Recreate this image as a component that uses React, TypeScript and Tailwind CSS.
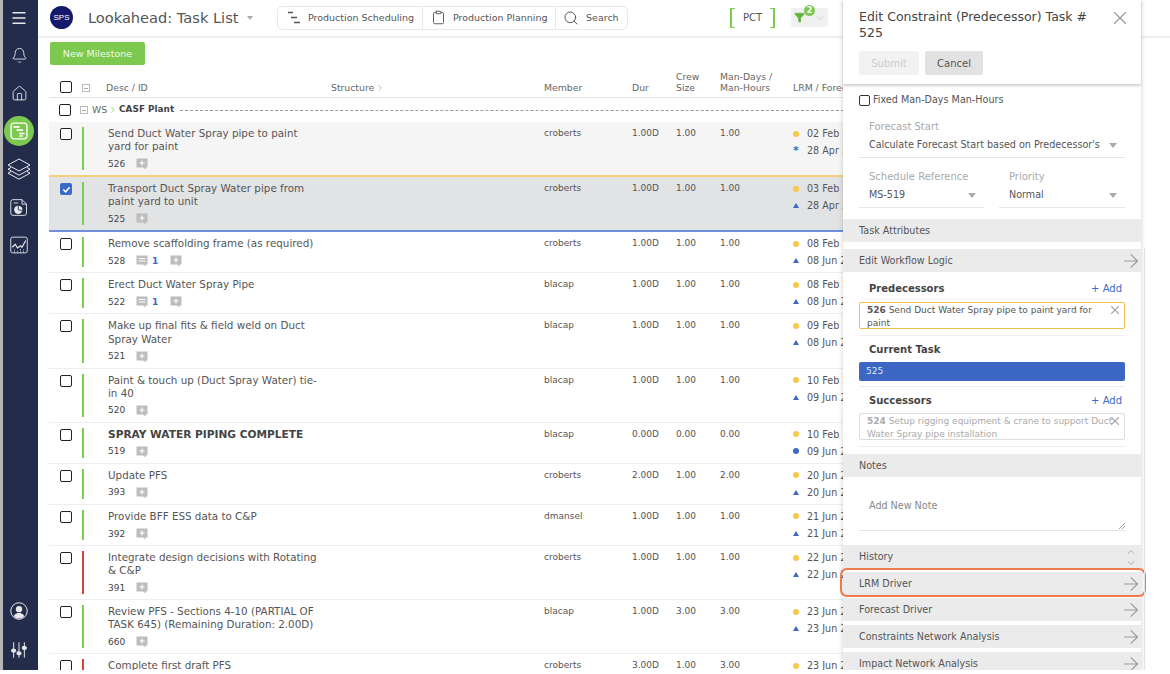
import React from 'react';
import { ArrowRight, Bell, ChevronDown, ChevronUp, ChevronRight, Clipboard, Filter, Home, Menu, Search, X } from 'lucide-react';

type Task = {
  id: string;
  title: string;
  member: string;
  dur: string;
  crew: string;
  hours: string;
  lrm: string;
  forecast: string;
  marker?: 'star' | 'tri' | 'dot';
  bar?: 'green' | 'red';
  comments?: boolean;
  bold?: boolean;
  state?: 'pred' | 'current';
};

const tasks: Task[] = [
  { id: '526', title: 'Send Duct Water Spray pipe to paint yard for paint', member: 'croberts', dur: '1.00D', crew: '1.00', hours: '1.00', lrm: '02 Feb 2022', forecast: '28 Apr 2022', marker: 'star', state: 'pred' },
  { id: '525', title: 'Transport Duct Spray Water pipe from paint yard to unit', member: 'croberts', dur: '1.00D', crew: '1.00', hours: '1.00', lrm: '03 Feb 2022', forecast: '28 Apr 2022', state: 'current' },
  { id: '528', title: 'Remove scaffolding frame (as required)', member: 'croberts', dur: '1.00D', crew: '1.00', hours: '1.00', lrm: '08 Feb 2022', forecast: '08 Jun 2022', comments: true },
  { id: '522', title: 'Erect Duct Water Spray Pipe', member: 'blacap', dur: '1.00D', crew: '1.00', hours: '1.00', lrm: '08 Feb 2022', forecast: '08 Jun 2022', comments: true },
  { id: '521', title: 'Make up final fits & field weld on Duct Spray Water', member: 'blacap', dur: '1.00D', crew: '1.00', hours: '1.00', lrm: '09 Feb 2022', forecast: '08 Jun 2022' },
  { id: '520', title: 'Paint & touch up (Duct Spray Water) tie-in 40', member: 'blacap', dur: '1.00D', crew: '1.00', hours: '1.00', lrm: '10 Feb 2022', forecast: '09 Jun 2022' },
  { id: '519', title: 'SPRAY WATER PIPING COMPLETE', member: 'blacap', dur: '0.00D', crew: '0.00', hours: '0.00', lrm: '10 Feb 2022', forecast: '09 Jun 2022', marker: 'dot', bold: true },
  { id: '393', title: 'Update PFS', member: 'croberts', dur: '2.00D', crew: '1.00', hours: '2.00', lrm: '20 Jun 2022', forecast: '20 Jun 2022' },
  { id: '392', title: 'Provide BFF ESS data to C&P', member: 'dmansel', dur: '1.00D', crew: '1.00', hours: '1.00', lrm: '21 Jun 2022', forecast: '21 Jun 2022' },
  { id: '391', title: 'Integrate design decisions with Rotating & C&P', member: 'croberts', dur: '1.00D', crew: '1.00', hours: '1.00', lrm: '22 Jun 2022', forecast: '22 Jun 2022', bar: 'red' },
  { id: '660', title: 'Review PFS - Sections 4-10 (PARTIAL OF TASK 645) (Remaining Duration: 2.00D)', member: 'blacap', dur: '1.00D', crew: '3.00', hours: '3.00', lrm: '23 Jun 2022', forecast: '23 Jun 2022' },
  { id: '', title: 'Complete first draft PFS', member: 'croberts', dur: '3.00D', crew: '1.00', hours: '3.00', lrm: '23 Jun 2022', forecast: '23 Jun 2022', bar: 'red' },
];

function GanttIcon({ size = 20 }: { size?: number }) {
  return (
    <svg width={size} height={size} viewBox="0 0 24 24" fill="none" stroke="currentColor" strokeWidth="1.6" strokeLinecap="round">
      <path d="M6 2.5h12a3.5 3.5 0 0 1 3.5 3.5v12a3.5 3.5 0 0 1-3.5 3.5H6A3.5 3.5 0 0 1 2.5 18V6A3.5 3.5 0 0 1 6 2.5z" />
      <path d="M6 7h6M10 11h6M13 15h5M13 18h3" strokeWidth="2" />
    </svg>
  );
}

function StackIcon() {
  return (
    <svg width="24" height="24" viewBox="0 0 24 24" fill="none" stroke="currentColor" strokeWidth="1" strokeLinejoin="round">
      <path d="M12 2 23 8l-11 6L1 8z" />
      <path d="m4 10.5-3 1.7 11 6 11-6-3-1.7" />
      <path d="m4 14.5-3 1.7 11 6 11-6-3-1.7" />
    </svg>
  );
}

function ReportIcon() {
  return (
    <svg width="18" height="19" viewBox="0 0 24 24" fill="none" stroke="currentColor" strokeWidth="1.2" strokeLinejoin="round">
      <path d="M4 1.5h12l6 6v12a3 3 0 0 1-3 3H4a3 3 0 0 1-3-3v-15a3 3 0 0 1 3-3z" />
      <path d="M16 1.5v6h6" />
      <path d="M5 6h6" />
      <circle cx="11" cy="15" r="5.5" fill="currentColor" stroke="none" />
      <path d="M11 15V9.5M11 15l5 1" stroke="#232d4b" strokeWidth="1.2" />
    </svg>
  );
}

function ChartIcon() {
  return (
    <svg width="18" height="18" viewBox="0 0 24 24" fill="none" stroke="currentColor" strokeWidth="1.2" strokeLinejoin="round">
      <rect x="1" y="1.5" width="22" height="21" rx="2.5" />
      <path d="m3 15 4-4 3 5 4-3 2 2 5-9" strokeWidth="1.6" />
      <path d="M6 22v-4M10 22v-3M14 22v-5M18 22v-4" strokeDasharray="1.5 1.5" />
    </svg>
  );
}

function UserIcon() {
  return (
    <svg width="18" height="18" viewBox="0 0 24 24" fill="none" stroke="currentColor" strokeWidth="1.3">
      <circle cx="12" cy="12" r="11" />
      <circle cx="12" cy="9.5" r="4.2" fill="currentColor" stroke="none" />
      <path d="M5 19c.5-3 4-3.8 5-4.5h4c1 .7 4.5 1.5 5 4.5-2 2-4.5 3-7 3s-5-1-7-3z" fill="currentColor" stroke="none" />
    </svg>
  );
}

function SlidersIcon() {
  return (
    <svg width="16" height="16" viewBox="0 0 24 24" fill="none" stroke="currentColor" strokeWidth="1.5" strokeLinecap="round">
      <path d="M4 1v22M12 1v22M20 1v22" />
      <rect x="1" y="11" width="6" height="4" rx="1" fill="currentColor" />
      <rect x="9" y="15" width="6" height="4" rx="1" fill="currentColor" />
      <rect x="17" y="7" width="6" height="4" rx="1" fill="currentColor" />
    </svg>
  );
}

function ProductionIcon() {
  return (
    <svg width="12" height="13" viewBox="0 0 12 13" fill="none" stroke="#555" strokeWidth="1.4">
      <path d="M0 1.5h5M3 6.5h6M6 11.5h6" />
    </svg>
  );
}

function NoteIcon({ lines }: { lines?: boolean }) {
  return (
    <svg width="12" height="12" viewBox="0 0 12 12">
      <path d="M0.5 0.5h11v9h-2v2l-2.5-2h-6.5z" fill="#bdbdbd" />
      {lines ? (
        <path d="M2.5 3.5h7M2.5 6h7" stroke="#fff" strokeWidth="1" />
      ) : (
        <path d="M6 2.5v5M3.5 5h5" stroke="#fff" strokeWidth="1.2" />
      )}
    </svg>
  );
}

function MinusBox() {
  return (
    <span className="w-[8px] h-[8px] border border-[#bbb] shrink-0 flex items-center justify-center">
      <span className="w-[4px] h-px bg-[#aaa]" />
    </span>
  );
}

function Checkbox({ checked }: { checked?: boolean }) {
  if (checked) {
    return (
      <div className="w-[12px] h-[12px] rounded-[2px] bg-[#3b69c9] flex items-center justify-center">
        <svg width="9" height="9" viewBox="0 0 10 10" fill="none" stroke="#fff" strokeWidth="1.8">
          <path d="m1.5 5 2.5 2.5 4.5-5" />
        </svg>
      </div>
    );
  }
  return <div className="w-[12px] h-[12px] rounded-[2px] border-[1.5px] border-[#222] bg-white" />;
}

function Marker({ kind }: { kind?: 'star' | 'tri' | 'dot' }) {
  if (kind === 'star') return <span className="w-[6px] text-center text-[#3b69c9] text-[11px] font-bold leading-[17px]">*</span>;
  if (kind === 'dot') return <span className="w-[6px] h-[6px] rounded-full bg-[#3b69c9]" />;
  return <span className="w-0 h-0 border-l-[3px] border-r-[3px] border-b-[5px] border-l-transparent border-r-transparent border-b-[#3b69c9]" />;
}

function TaskRow({ task }: { task: Task }) {
  const rowClass =
    task.state === 'pred'
      ? 'bg-[#f5f5f5] border-b-2 border-[#f4cf7c]'
      : task.state === 'current'
        ? 'bg-[#e2e3e5] border-b-2 border-[#6f8fd8]'
        : 'border-b border-[#eeeeee]';
  return (
    <div className={`flex text-[9px] leading-[13px] text-[#555] ${rowClass}`}>
      <div className="w-[33px] pl-[11px] pt-[6px] shrink-0">
        <Checkbox checked={task.state === 'current'} />
      </div>
      <div className={`w-[2px] my-[5px] shrink-0 ${task.bar === 'red' ? 'bg-[#d8413a]' : 'bg-[#7dcf4f]'}`} />
      <div className="w-[247px] pl-[24px] pt-[5px] shrink-0">
        <div className={task.bold ? 'font-bold text-[#444] w-[215px] text-[10.6px] leading-[13.08px]' : 'w-[215px] text-[10.35px] leading-[13.08px]'}>{task.title}</div>
        <div className="flex items-center h-[16px] mt-[3px] mb-[3px]">
          <span className="w-[28px] text-[#444]">{task.id}</span>
          {task.comments && (
            <span className="flex items-center w-[34px]">
              <NoteIcon lines />
              <span className="ml-[4px] font-bold text-[#3b69c9]">1</span>
            </span>
          )}
          <NoteIcon />
        </div>
      </div>
      <div className="w-[213px] shrink-0" />
      <div className="w-[88px] pt-[5px] shrink-0">{task.member}</div>
      <div className="w-[44px] pt-[5px] shrink-0">{task.dur}</div>
      <div className="w-[44px] pt-[5px] shrink-0">{task.crew}</div>
      <div className="w-[73px] pt-[5px] shrink-0">{task.hours}</div>
      <div className="pt-[3px] shrink-0 text-[9.6px] leading-[17px]">
        <div className="flex items-center gap-[8px]">
          <span className="w-[6px] h-[6px] rounded-full bg-[#f7c948]" />
          <span>{task.lrm}</span>
        </div>
        <div className="flex items-center gap-[8px]">
          <Marker kind={task.marker} />
          <span>{task.forecast}</span>
        </div>
      </div>
    </div>
  );
}

function BarRow({ label, icon = true }: { label: string; icon?: boolean }) {
  return (
    <div className="h-[23px] bg-[#ebebeb] flex items-center justify-between pl-[16px] text-[#555] text-[9.6px]">
      <span className={icon ? 'mt-[2px]' : 'mt-[1px]'}>{label}</span>
      {icon && <ArrowRight size={22} strokeWidth={1.2} className="text-[#999] -mr-[1px]" />}
    </div>
  );
}

function SelectField({ label, value, width }: { label: string; value: string; width: string }) {
  return (
    <div className={`${width} border-b border-[#e6e6e6] h-[38px]`}>
      <div className="pl-[10px] text-[10px] leading-[14px] text-[#aaa]">{label}</div>
      <div className="pl-[10px] pr-[8px] mt-[4px] flex items-center justify-between text-[9.6px] leading-[14px] text-[#555]">
        <span className="whitespace-nowrap">{value}</span>
        <span className="w-0 h-0 border-l-[4px] border-r-[4px] border-t-[5px] border-l-transparent border-r-transparent border-t-[#aaa]" />
      </div>
    </div>
  );
}

function SectionHead({ label, add }: { label: string; add?: boolean }) {
  return (
    <div className="h-[14px] flex items-center justify-between pl-[10px] pr-[3px] text-[10px]">
      <span className="font-bold text-[#444]">{label}</span>
      {add && <span className="text-[#3b69c9]">+ Add</span>}
    </div>
  );
}

export default function App() {
  return (
    <div className="w-[1170px] h-[670px] overflow-hidden relative flex bg-white font-['DejaVu_Sans',sans-serif]">
      <aside className="w-[38px] shrink-0 border-l-[3px] border-[#b5b5b5] bg-[#232d4b] pr-[3px] flex flex-col items-center text-[#e8e8ec]">
        <div className="h-[36px] flex items-center justify-center"><Menu size={18} strokeWidth={1.75} /></div>
        <div className="h-[38px] flex items-center justify-center"><Bell size={17} strokeWidth={1.25} /></div>
        <div className="h-[38px] flex items-center justify-center"><Home size={17} strokeWidth={1.25} /></div>
        <div className="h-[38px] flex items-center justify-center">
          <div className="w-[30px] h-[30px] rounded-full bg-[#7dc94f] flex items-center justify-center text-white"><GanttIcon /></div>
        </div>
        <div className="h-[38px] flex items-center justify-center"><StackIcon /></div>
        <div className="h-[38px] flex items-center justify-center"><ReportIcon /></div>
        <div className="h-[38px] flex items-center justify-center"><ChartIcon /></div>
        <div className="mt-auto h-[38px] flex items-center justify-center"><UserIcon /></div>
        <div className="h-[40px] flex items-center justify-center"><SlidersIcon /></div>
      </aside>

      <main className="flex-1 min-w-0 overflow-hidden">
        <header className="h-[38px] border-b-2 border-[#eeeeee] flex items-center pl-[12px] pb-[1px]">
          <div className="w-[23px] h-[23px] rounded-full bg-[#14196b] flex items-center justify-center text-white text-[8px] font-['Liberation_Sans',sans-serif]">SPS</div>
          <h1 className="ml-[15px] w-[150px] text-[14.6px] leading-[20px] text-[#555] whitespace-nowrap">Lookahead: Task List</h1>
          <span className="ml-[9px] w-0 h-0 border-l-[3.5px] border-r-[3.5px] border-t-[4px] border-l-transparent border-r-transparent border-t-[#aaa]" />
          <div className="ml-[24px] h-[24px] border border-[#e8e8e8] rounded-[5px] flex text-[9.5px] text-[#555] whitespace-nowrap">
            <div className="w-[145px] flex items-center pl-[10px] border-r border-[#e8e8e8]">
              <ProductionIcon />
              <span className="ml-[8px] mt-[1px]">Production Scheduling</span>
            </div>
            <div className="w-[133px] flex items-center pl-[8px] border-r border-[#e8e8e8]">
              <Clipboard size={15} strokeWidth={1.5} />
              <span className="ml-[7px] mt-[1px]">Production Planning</span>
            </div>
            <div className="w-[71px] flex items-center pl-[7px]">
              <Search size={16} strokeWidth={1.5} />
              <span className="ml-[7px] mt-[1px]">Search</span>
            </div>
          </div>
          <div className="ml-[102px] w-[45px] h-[20px] border-x-2 border-[#7dc94f] relative flex items-center justify-center text-[10px] text-[#555]">
            <span className="absolute left-0 top-0 w-[3px] h-full border-y border-[#7dc94f]" />
            <span className="absolute right-0 top-0 w-[3px] h-full border-y border-[#7dc94f]" />
            PCT
          </div>
          <div className="ml-[16px] w-[37px] h-[19px] bg-[#f0f0f0] rounded-[2px] relative flex items-center pl-[3px]">
            <Filter size={11} className="text-[#5fb536] fill-[#5fb536]" />
            <ChevronDown size={12} strokeWidth={1} className="ml-[9px] text-[#aaa]" />
            <span className="absolute left-[13px] -top-[3px] w-[11px] h-[11px] rounded-full bg-[#7dc94f] text-white text-[8px] leading-[11px] font-bold text-center">2</span>
          </div>
        </header>

        <div className="pl-[12px] pt-[4px]">
          <button className="block w-[95px] h-[23px] pt-[1px] bg-[#7dc94f] rounded-[2px] text-[9.5px] text-[#eefbe6]">New Milestone</button>
        </div>

        <div className="ml-[11px] w-[820px]">
          <div className="mt-[3px] h-[30px] flex items-end border-b border-[#e4e4e4] pb-[4px] text-[9.3px] leading-[11px] text-[#666]">
            <div className="w-[33px] pl-[11px] shrink-0"><Checkbox /></div>
            <div className="w-[24px] shrink-0 pb-[1px]"><MinusBox /></div>
            <div className="w-[225px] shrink-0">Desc / ID</div>
            <div className="w-[213px] shrink-0 flex items-center">Structure <ChevronRight size={10} strokeWidth={1} className="ml-[1px]" /></div>
            <div className="w-[88px] shrink-0">Member</div>
            <div className="w-[44px] shrink-0">Dur</div>
            <div className="w-[44px] shrink-0">Crew<br />Size</div>
            <div className="w-[73px] shrink-0">Man-Days /<br />Man-Hours</div>
            <div className="shrink-0 whitespace-nowrap">LRM / Forecast</div>
          </div>
          <div className="h-[24px] flex items-center text-[9.3px]">
            <div className="w-[31px] pl-[10px] shrink-0"><Checkbox /></div>
            <MinusBox />
            <span className="ml-[4px] text-[#666]">WS</span>
            <ChevronRight size={10} strokeWidth={2} className="mx-[1px] text-[#7dc94f]" />
            <span className="font-bold text-[#444] text-[8.9px]">CASF Plant</span>
            <span className="ml-[6px] flex-1 border-t border-dashed border-[#999]" />
          </div>
          {tasks.map((task) => (
            <TaskRow key={task.title} task={task} />
          ))}
        </div>
      </main>

      <section className="absolute left-[843px] top-0 w-[298px] h-[670px] bg-white shadow-[0_0_5px_rgba(0,0,0,0.2)]">
        <div className="h-[84px] shadow-[0_2px_2px_rgba(0,0,0,0.18)] pl-[16px] pt-[9px] relative">
          <h2 className="w-[240px] text-[12.5px] leading-[16px] text-[#444]">Edit Constraint (Predecessor) Task # 525</h2>
          <X size={22} strokeWidth={1.25} className="absolute right-[10px] top-[7px] text-[#999]" />
          <div className="mt-[10px] flex gap-[6px] text-[10px]">
            <button className="w-[60px] h-[24px] bg-[#f2f2f2] rounded-[2px] text-[#ccc]">Submit</button>
            <button className="w-[58px] h-[24px] bg-[#e2e2e2] rounded-[2px] text-[#555]">Cancel</button>
          </div>
        </div>

        <div className="px-[16px] pt-[9px]">
          <label className="flex items-center gap-[3px] h-[14px] text-[9.6px] text-[#555]">
            <span className="w-[11px] h-[11px] rounded-[2px] border-[1.5px] border-[#333]" />
            Fixed Man-Days Man-Hours
          </label>
          <div className="mt-[13px]">
            <SelectField label="Forecast Start" value="Calculate Forecast Start based on Predecessor's" width="w-[266px]" />
          </div>
          <div className="mt-[12px] flex gap-[15px]">
            <SelectField label="Schedule Reference" value="MS-519" width="w-[125px]" />
            <SelectField label="Priority" value="Normal" width="w-[126px]" />
          </div>
        </div>

        <div className="mt-[11px]"><BarRow label="Task Attributes" icon={false} /></div>
        <div className="mt-[7px]"><BarRow label="Edit Workflow Logic" /></div>

        <div className="px-[16px] pt-[9px]">
          <SectionHead label="Predecessors" add />
          <div className="mt-[7px] h-[27px] border border-[#f4c14e] rounded-[2px] pl-[7px] pr-[16px] pt-[1px] relative text-[9px] leading-[12.5px] text-[#555]">
            <span className="font-bold">526</span> Send Duct Water Spray pipe to paint yard for paint
            <X size={14} className="absolute right-[2px] top-0 text-[#aaa]" />
          </div>
          <div className="mt-[6px] border-t border-[#eeeeee]" />
          <div className="mt-[6px]"><SectionHead label="Current Task" /></div>
          <div className="mt-[6px] h-[19px] bg-[#3b66c4] rounded-[2px] pl-[7px] flex items-center text-[9px] text-[#dfe6f7]">525</div>
          <div className="mt-[5px] border-t border-[#eeeeee]" />
          <div className="mt-[6px]"><SectionHead label="Successors" add /></div>
          <div className="mt-[6px] h-[27px] border border-[#ddd] rounded-[2px] pl-[7px] pr-[5px] pt-[1px] relative text-[9px] leading-[12.5px] text-[#aaa]">
            <span className="font-bold">524</span> Setup rigging equipment & crane to support Duct Water Spray pipe installation
            <X size={14} className="absolute right-[2px] top-0 text-[#aaa]" />
          </div>
          <div className="mt-[6px] border-t border-[#eeeeee]" />
        </div>

        <div className="mt-[7px]"><BarRow label="Notes" icon={false} /></div>
        <div className="mx-[16px] h-[54px] border-b border-[#e6e6e6] pl-[10px] pt-[22px] text-[9.6px] leading-[14px] text-[#888] relative">
          Add New Note
          <svg width="6" height="6" viewBox="0 0 6 6" className="absolute right-0 bottom-[1px]" stroke="#888" strokeWidth="0.8">
            <path d="M0 6 6 0M3 6l3-3" />
          </svg>
        </div>
        <div className="mt-[14px] h-[24px] bg-[#ebebeb] flex items-center justify-between pl-[16px] pr-[4px] text-[#555] text-[9.6px]">
          <span>History</span>
          <span className="flex flex-col text-[#999]">
            <ChevronUp size={12} strokeWidth={1.5} className="-mb-[1px]" />
            <ChevronDown size={12} strokeWidth={1.5} />
          </span>
        </div>
        <div className="mt-[3px] relative">
          <BarRow label="LRM Driver" />
          <div className="absolute -left-[3px] -right-[5px] -top-[4px] -bottom-[2px] border-2 border-[#ee7a4a] rounded-[7px]" />
        </div>
        <div className="mt-[3px]"><BarRow label="Forecast Driver" /></div>
        <div className="mt-[4px]"><BarRow label="Constraints Network Analysis" /></div>
        <div className="mt-[4px]"><BarRow label="Impact Network Analysis" /></div>
      </section>

      {/* thin rule right of the drawer, only below the task attributes */}
      <div className="absolute left-[1144px] top-[248px] bottom-0 w-px bg-[#e2e2e2]" />
    </div>
  );
}
